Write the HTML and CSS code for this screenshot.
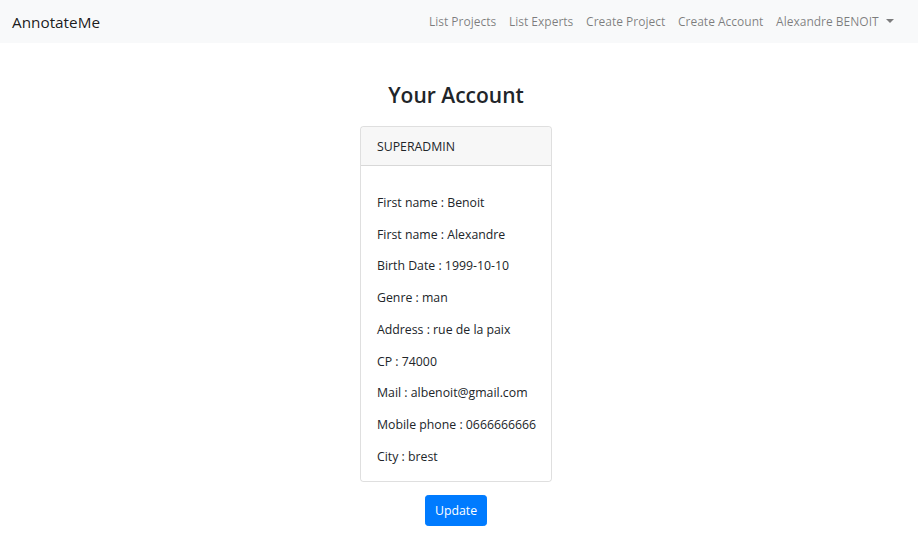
FILE: index.html
```html
<!DOCTYPE html>
<html lang="en">
<head>
<meta charset="utf-8">
<title>AnnotateMe</title>
<link rel="stylesheet" href="styles.css">
</head>
<body>
<nav class="navbar">
  <a class="brand" href="#">AnnotateMe</a>
  <ul class="nav">
    <li><a class="nav-link" href="#">List Projects</a></li>
    <li><a class="nav-link" href="#">List Experts</a></li>
    <li><a class="nav-link" href="#">Create Project</a></li>
    <li><a class="nav-link" href="#">Create Account</a></li>
    <li><a class="nav-link dropdown-toggle" href="#">Alexandre BENOIT</a></li>
  </ul>
</nav>
<main class="main">
  <h3 class="title">Your Account</h3>
  <div class="card">
    <div class="card-header">SUPERADMIN</div>
    <div class="card-body">
      <p>First name : Benoit</p>
      <p>First name : Alexandre</p>
      <p>Birth Date : 1999-10-10</p>
      <p>Genre : man</p>
      <p>Address : rue de la paix</p>
      <p>CP : 74000</p>
      <p>Mail : albenoit@gmail.com</p>
      <p>Mobile phone : 0666666666</p>
      <p>City : brest</p>
    </div>
  </div>
  <button class="btn" type="button">Update</button>
</main>
</body>
</html>
```
FILE: styles.css
```css
* { box-sizing: border-box; }
html, body {
  margin: 0;
  background: #fff;
}
body {
  font-family: "Open Sans", "Noto Sans", sans-serif;
  font-size: 12.3px;
  line-height: 1.5;
  color: #212529;
}
a { text-decoration: none; }
.navbar {
  display: flex;
  align-items: center;
  justify-content: space-between;
  height: 43px;
  padding: 0 18px 0 12px;
  background: #f8f9fa;
}
.brand {
  font-size: 15.3px;
  color: rgba(0,0,0,.9);
  line-height: 24px;
}
.nav {
  display: flex;
  list-style: none;
  margin: 0;
  padding: 0;
}
.nav-link {
  display: block;
  padding: 0 6.4px;
  font-size: 12px;
  color: rgba(0,0,0,.5);
}
.dropdown-toggle::after {
  content: "";
  display: inline-block;
  margin-left: 7px;
  vertical-align: 3px;
  border-top: 4.5px solid;
  border-left: 4.2px solid transparent;
  border-right: 4.2px solid transparent;
}
.main {
  display: flex;
  flex-direction: column;
  align-items: center;
  padding-right: 6px;
}
.title {
  margin: 39px 0 0;
  font-size: 21px;
  font-weight: 600;
  line-height: 27px;
}
.card {
  width: 192px;
  margin-top: 17px;
  border: 1px solid rgba(0,0,0,.125);
  border-radius: 3.2px;
}
.card-header {
  padding: 10.2px 16px 9px;
  background: rgba(0,0,0,.03);
  border-bottom: 1px solid rgba(0,0,0,.125);
  line-height: 19.2px;
  border-radius: 3px 3px 0 0;
}
.card-body {
  padding: 14px 16px 15px;
}
.card-body p {
  margin: 12.55px 0 0;
  line-height: 19.2px;
  white-space: nowrap;
}
.btn {
  margin-top: 13px;
  padding: 4.8px 8.6px;
  font-family: inherit;
  font-size: 12.3px;
  line-height: 19.2px;
  color: #fff;
  background: #007bff;
  border: 1px solid #007bff;
  border-radius: 3.2px;
}
```
